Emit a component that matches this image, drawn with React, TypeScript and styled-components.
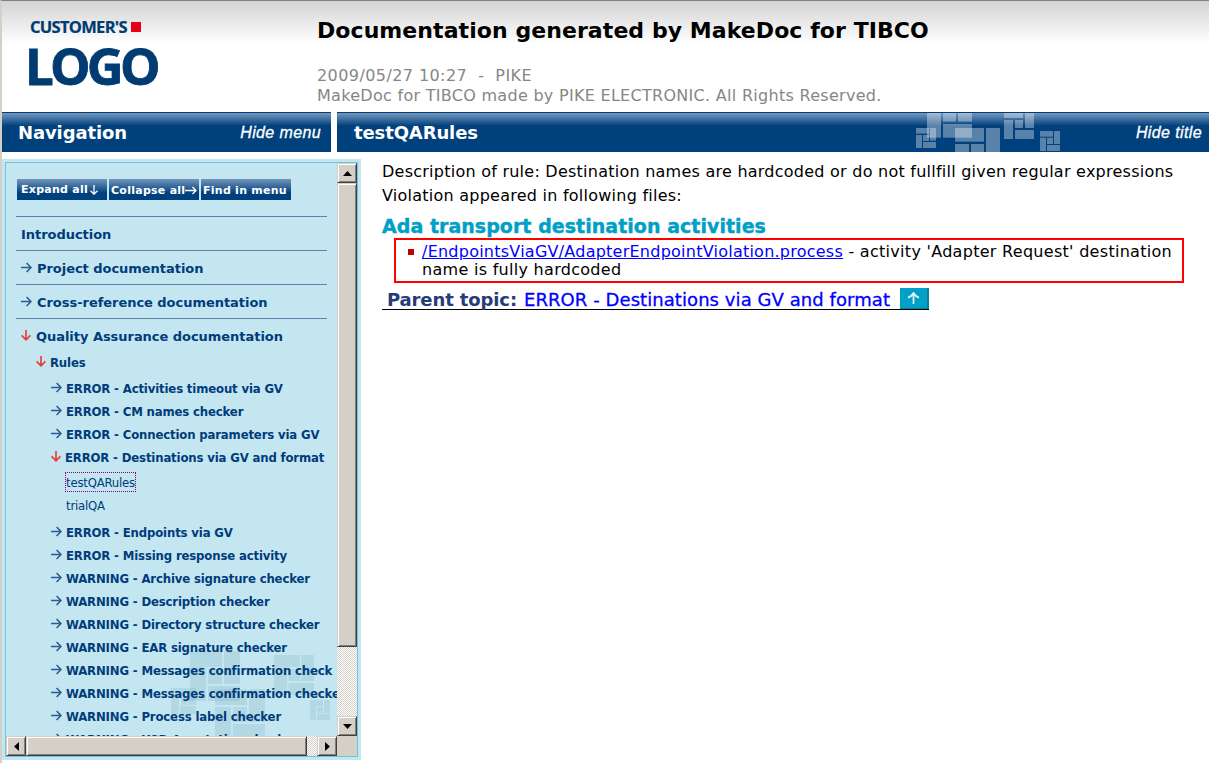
import React from 'react';
import styled, { createGlobalStyle, css } from 'styled-components';

const NAVY = '#003c7b';
const ICE = '#c4e6f0';
const SILVER = '#d4d0c8';

const GlobalStyle = createGlobalStyle`
  * { box-sizing: border-box; }
  body { margin: 0; background: #fff; overflow: hidden; font-family: 'DejaVu Sans', Verdana, sans-serif; }
`;

const Page = styled.div`
  width: 1209px;
  height: 763px;
  border-top: 1px solid #808080;
  border-left: 2px solid ${SILVER};
  display: flex;
  flex-direction: column;
  background: #fff;
  overflow: hidden;
`;

const Header = styled.header`
  height: 111px;
  flex: none;
  display: flex;
  background: linear-gradient(#d3d3d3, #fff 43px);
`;

const LogoBlock = styled.div`
  width: 315px;
  padding: 17px 0 0 28px;
  font-family: 'Open Sans', 'Noto Sans', sans-serif;
  font-weight: 700;
  color: #003b71;
  white-space: nowrap;
`;

const LogoTop = styled.div`
  display: flex;
  align-items: center;
  gap: 4px;
  height: 18px;
  font-size: 16.5px;
  line-height: 18px;
  letter-spacing: -0.7px;
  -webkit-text-stroke: 0.2px #003b71;
`;

const LogoSquare = styled.span`
  width: 10px;
  height: 10px;
  background: #e2001a;
`;

const LogoMain = styled.div`
  margin: 9px 0 0 -5px;
  font-size: 51px;
  line-height: 40px;
  letter-spacing: -3.8px;
  -webkit-text-stroke: 0.8px #003b71;
`;

const TitleBlock = styled.div`
  padding-top: 16px;
  white-space: pre;
`;

const DocTitle = styled.h1`
  margin: 0 0 21px;
  font-size: 22px;
  line-height: 28px;
  letter-spacing: 0.07px;
  color: #000;
`;

const Meta = styled.div<{ $spacing: number }>`
  font-size: 16px;
  line-height: 20px;
  letter-spacing: ${p => p.$spacing}px;
  color: #868686;
`;

const BarRow = styled.div`
  display: flex;
  gap: 6px;
  height: 40px;
  flex: none;
`;

const Bar = styled.div<{ $wide?: boolean }>`
  ${p => (p.$wide ? css`flex: 1; padding: 0 8px 0 17px;` : css`width: 329px; flex: none; padding: 0 8px 0 16px;`)}
  display: flex;
  align-items: center;
  border-top: 1px solid #003c78;
  background: linear-gradient(#7598bc, #00407d 13px);
  color: #fff;
`;

const BarTitle = styled.span`
  flex: 1;
  font-weight: 700;
  font-size: 18px;
  line-height: 39px;
  letter-spacing: -0.12px;
`;

const BarAction = styled.span<{ $wide?: boolean }>`
  font: italic 16px/40px 'Liberation Sans', Arial, sans-serif;
  letter-spacing: 0.38px;
  margin-right: ${p => (p.$wide ? '-1px' : '2px')};
  padding-top: 1px;
  -webkit-text-stroke: 0.3px #fff;
`;

const BarTiles = styled.svg`
  width: 145px;
  height: 39px;
  margin-right: 75px;
  fill: #fff;
  fill-opacity: 0.35;
  flex: none;
`;

const Body = styled.div`
  flex: 1;
  display: flex;
`;

const NavPanel = styled.nav`
  width: 359px;
  height: 601px;
  margin-top: 7px;
  padding: 3px;
  background: ${ICE};
  flex: none;
`;

const NavFrame = styled.div`
  width: 353px;
  height: 595px;
  border: 1px solid #72c4d6;
  display: grid;
  grid-template-columns: 331px 20px;
  grid-template-rows: 573px 20px;
`;

const NavScroll = styled.div`
  position: relative;
  overflow: hidden;
  padding: 16px 10px 0;
  color: ${NAVY};
`;

const PanelTiles = styled.svg`
  position: absolute;
  left: 165px;
  top: 488px;
  width: 166px;
  height: 85px;
  fill: #5d9bad;
  fill-opacity: 0.18;
`;

const NavContent = styled.div`
  position: relative;
`;

const ButtonRow = styled.div`
  display: flex;
  gap: 2px;
  margin: 0 0 16px 1px;
`;

const NavButton = styled.button<{ $first?: boolean }>`
  width: 90px;
  height: 21px;
  padding: ${p => (p.$first ? '0 0 0 4px' : '2px 0 0 2px')};
  border: 0;
  display: flex;
  align-items: center;
  background: linear-gradient(#7397bc, #00407d 14px);
  color: #fff;
  font: 700 11px/19px 'DejaVu Sans', Verdana, sans-serif;
  letter-spacing: 0.26px;
  white-space: nowrap;
  svg { flex: none; }
`;

const Section = styled.div`
  height: 34px;
  width: 311px;
  padding: 2px 0 0 5px;
  border-top: 1px solid #5b81a9;
  display: flex;
  align-items: center;
  font-weight: 700;
  font-size: 13px;
  letter-spacing: -0.04px;
  white-space: nowrap;
`;

const TreeRow = styled.div<{ $level: number; $height: number }>`
  height: ${p => p.$height}px;
  padding: 2px 0 0 ${p => 5 + p.$level * 15}px;
  display: flex;
  align-items: center;
  font: 700 13px/18px 'DejaVu Sans Condensed', 'DejaVu Sans', sans-serif;
  font-stretch: condensed;
  letter-spacing: -0.15px;
  white-space: nowrap;
`;

const RuleText = styled.span`
  margin-left: -1px;
`;

const Branch = styled.div`
  padding-top: 5px;
`;

const Leaves = styled.div`
  padding: 3px 0 3px 48px;
`;

const Leaf = styled.div`
  height: 23px;
  padding-left: 1px;
  display: flex;
  align-items: center;
  font: 400 13px/20px 'DejaVu Sans Condensed', 'DejaVu Sans', sans-serif;
  font-stretch: condensed;
  letter-spacing: -0.2px;
`;

const Focus = styled.span<{ $on?: boolean }>`
  height: 20px;
  margin-top: -1px;
  border: 1px dotted ${p => (p.$on ? '#800080' : 'transparent')};
`;

const ArrowBox = styled.svg<{ $down?: boolean }>`
  width: 11px;
  height: 11px;
  flex: none;
  margin: -2px ${p => (p.$down ? 4 : 5)}px 0 0;
  fill: none;
  stroke: ${p => (p.$down ? '#e53a3a' : '#2d5c90')};
  stroke-width: 1.6;
`;

const raised = css`
  background: ${SILVER};
  border-style: solid;
  border-width: 1px;
  border-color: ${SILVER} #404040 #404040 ${SILVER};
  box-shadow: inset 1px 1px #fff, inset -1px -1px #808080;
`;

const track = css`
  background: repeating-conic-gradient(#fff 0 25%, ${SILVER} 0 50%) 0 0 / 2px 2px;
`;

const VBar = styled.div`
  display: flex;
  flex-direction: column;
  ${track}
`;

const HBar = styled.div`
  display: flex;
  ${track}
`;

const ScrollButton = styled.div`
  width: 20px;
  height: 20px;
  flex: none;
  display: flex;
  align-items: center;
  justify-content: center;
  ${raised}
`;

const VThumb = styled.div`
  height: 464px;
  margin-bottom: 69px;
  ${raised}
`;

const HThumb = styled.div`
  width: 281px;
  margin-right: 10px;
  ${raised}
`;

const Corner = styled.div`
  background: ${SILVER};
`;

const Content = styled.main`
  padding: 8px 0 0 21px;
  color: #000;
  font-size: 16px;
`;

const Line = styled.p`
  margin: 0;
  line-height: 24px;
  letter-spacing: 0.245px;
  white-space: nowrap;
`;

const Heading = styled.h2`
  margin: 6px 0 0;
  font-size: 19px;
  line-height: 24px;
  letter-spacing: 0.04px;
  color: #00a0c6;
  -webkit-text-stroke: 0.4px #00a0c6;
`;

const Violation = styled.div`
  width: 790px;
  height: 45px;
  margin: 0 0 5px 12px;
  border: 2px solid #f00;
  padding: 3px 0 0 12px;
  display: flex;
  align-items: flex-start;
  gap: 8px;
  line-height: 18px;
`;

const Bullet = styled.span`
  width: 6px;
  height: 6px;
  margin-top: 6px;
  background: #c00000;
  flex: none;
`;

const ViolationText = styled.span`
  letter-spacing: 0.29px;
  white-space: nowrap;
`;

const FileLink = styled.a`
  color: #0000ff;
  text-decoration: underline;
  letter-spacing: 0.24px;
`;

const ParentRow = styled.div`
  width: 547px;
  height: 22px;
  padding-left: 5px;
  border-bottom: 1px solid #000;
  display: flex;
  align-items: center;
  font-size: 18px;
  line-height: 22px;
  white-space: nowrap;
`;

const ParentLabel = styled.span`
  width: 137px;
  padding-top: 2px;
  font-weight: 700;
  color: #263c78;
  letter-spacing: -0.12px;
`;

const ParentLink = styled.a`
  flex: 1;
  padding-top: 2px;
  color: #0000ff;
  letter-spacing: 0.07px;
  -webkit-text-stroke: 0.3px #0000ff;
`;

const UpButton = styled.span`
  width: 29px;
  height: 21px;
  display: flex;
  align-items: center;
  justify-content: center;
  background: #00a0c8;
  border-right: 2px solid #0b7f98;
  border-bottom: 1px solid #0b7f98;
`;

const Arrow = ({ down }: { down?: boolean }) => (
  <ArrowBox $down={down} viewBox="0 0 11 11">
    {down ? <path d="M5 0V10M0.6 5.4L5 9.8L9.4 5.4" /> : <path d="M0 5.5H10M5.6 1L10 5.5L5.6 10" />}
  </ArrowBox>
);

const Triangle = ({ kind }: { kind: 'up' | 'down' | 'left' | 'right' }) => {
  const points = {
    up: '4.5,0 9,5 0,5',
    down: '0,0 9,0 4.5,5',
    left: '0,4.5 5,0 5,9',
    right: '5,4.5 0,0 0,9',
  }[kind];
  const upright = kind === 'up' || kind === 'down';
  return (
    <svg width={upright ? 9 : 5} height={upright ? 5 : 9}>
      <polygon points={points} fill="#000" />
    </svg>
  );
};

type Box = [number, number, number, number];

const barBoxes: Box[] = [
  [141, 69, 183, 143], [189, 69, 228, 95], [234, 69, 276, 95], [189, 102, 276, 143],
  [225, 114, 312, 155], [318, 114, 360, 186], [225, 162, 267, 186], [273, 162, 312, 186],
  [108, 114, 147, 131], [150, 114, 168, 152], [108, 135, 126, 174], [129, 135, 147, 153], [129, 156, 168, 174],
  [372, 69, 429, 84], [435, 69, 462, 114], [372, 90, 399, 147], [405, 90, 429, 114], [405, 120, 462, 147],
  [480, 123, 519, 140], [522, 123, 540, 162], [480, 143, 498, 183], [501, 143, 519, 162], [501, 165, 540, 183],
];

const panelBoxes: Box[] = [
  [75, 18, 171, 66], [177, 18, 225, 117], [75, 66, 123, 168], [129, 72, 171, 117], [129, 123, 225, 168],
  [18, 129, 93, 150], [18, 150, 42, 207], [48, 156, 66, 180], [45, 183, 93, 207], [69, 153, 93, 180],
  [150, 132, 246, 180], [252, 132, 300, 231], [150, 186, 198, 273], [204, 186, 246, 231], [204, 237, 300, 273],
  [327, 30, 405, 66], [409, 30, 447, 108], [327, 66, 366, 150], [370, 72, 405, 108], [370, 114, 447, 150],
  [435, 165, 474, 183], [477, 165, 495, 204], [435, 183, 453, 225], [456, 186, 474, 204], [456, 207, 495, 225],
];

const Boxes = ({ items }: { items: Box[] }) => (
  <>
    {items.map(([x1, y1, x2, y2], i) => (
      <rect key={i} x={x1} y={y1} width={x2 - x1} height={y2 - y1} />
    ))}
  </>
);

const before = [
  'ERROR - Activities timeout via GV',
  'ERROR - CM names checker',
  'ERROR - Connection parameters via GV',
];

const after = [
  'ERROR - Endpoints via GV',
  'ERROR - Missing response activity',
  'WARNING - Archive signature checker',
  'WARNING - Description checker',
  'WARNING - Directory structure checker',
  'WARNING - EAR signature checker',
  'WARNING - Messages confirmation check',
  'WARNING - Messages confirmation checker',
  'WARNING - Process label checker',
  'WARNING - XSD Annotation checker',
];

const Rule = ({ text, open }: { text: string; open?: boolean }) => (
  <TreeRow $level={2} $height={23}>
    <Arrow down={open} />
    <RuleText>{text}</RuleText>
  </TreeRow>
);

export default function App() {
  return (
    <>
      <GlobalStyle />
      <Page>
        <Header>
          <LogoBlock>
            <LogoTop>CUSTOMER'S<LogoSquare /></LogoTop>
            <LogoMain>LOGO</LogoMain>
          </LogoBlock>
          <TitleBlock>
            <DocTitle>Documentation generated by MakeDoc for TIBCO</DocTitle>
            <Meta $spacing={0.42}>{'2009/05/27 10:27  -  PIKE'}</Meta>
            <Meta $spacing={0.29}>MakeDoc for TIBCO made by PIKE ELECTRONIC. All Rights Reserved.</Meta>
          </TitleBlock>
        </Header>
        <BarRow>
          <Bar>
            <BarTitle>Navigation</BarTitle>
            <BarAction>Hide menu</BarAction>
          </Bar>
          <Bar $wide>
            <BarTitle>testQARules</BarTitle>
            <BarTiles viewBox="108 69 435 117"><Boxes items={barBoxes} /></BarTiles>
            <BarAction $wide>Hide title</BarAction>
          </Bar>
        </BarRow>
        <Body>
          <NavPanel>
            <NavFrame>
              <NavScroll>
                <PanelTiles viewBox="18 18 498 255"><Boxes items={panelBoxes} /></PanelTiles>
                <NavContent>
                  <ButtonRow>
                    <NavButton $first>
                      Expand all
                      <svg width="11" height="11" viewBox="0 0 11 11" fill="none" stroke="#fff" strokeWidth="1.3">
                        <path d="M6 1V10M2.5 6.8L6 10.2L9.5 6.8" />
                      </svg>
                    </NavButton>
                    <NavButton>
                      Collapse all
                      <svg width="12" height="11" viewBox="0 0 12 11" fill="none" stroke="#fff" strokeWidth="1.3">
                        <path d="M0 5.5H11M7.5 2L11 5.5L7.5 9" />
                      </svg>
                    </NavButton>
                    <NavButton>Find in menu</NavButton>
                  </ButtonRow>
                  <Section>Introduction</Section>
                  <Section><Arrow />Project documentation</Section>
                  <Section><Arrow />Cross-reference documentation</Section>
                  <Section><Arrow down />Quality Assurance documentation</Section>
                  <TreeRow $level={1} $height={19}><Arrow down /><RuleText>Rules</RuleText></TreeRow>
                  <Branch>
                    {before.map(t => <Rule key={t} text={t} />)}
                    <Rule text="ERROR - Destinations via GV and format" open />
                    <Leaves>
                      <Leaf><Focus $on>testQARules</Focus></Leaf>
                      <Leaf><Focus>trialQA</Focus></Leaf>
                    </Leaves>
                    {after.map(t => <Rule key={t} text={t} />)}
                  </Branch>
                </NavContent>
              </NavScroll>
              <VBar>
                <ScrollButton><Triangle kind="up" /></ScrollButton>
                <VThumb />
                <ScrollButton><Triangle kind="down" /></ScrollButton>
              </VBar>
              <HBar>
                <ScrollButton><Triangle kind="left" /></ScrollButton>
                <HThumb />
                <ScrollButton><Triangle kind="right" /></ScrollButton>
              </HBar>
              <Corner />
            </NavFrame>
          </NavPanel>
          <Content>
            <Line>Description of rule: Destination names are hardcoded or do not fullfill given regular expressions</Line>
            <Line>Violation appeared in following files:</Line>
            <Heading>Ada transport destination activities</Heading>
            <Violation>
              <Bullet />
              <ViolationText>
                <FileLink>/EndpointsViaGV/AdapterEndpointViolation.process</FileLink> - activity 'Adapter Request' destination<br />
                name is fully hardcoded
              </ViolationText>
            </Violation>
            <ParentRow>
              <ParentLabel>Parent topic:</ParentLabel>
              <ParentLink>ERROR - Destinations via GV and format</ParentLink>
              <UpButton>
                <svg width="13" height="12" viewBox="0 0 13 12" fill="none" stroke="#e4f8fc" strokeWidth="1.7">
                  <path d="M6.5 12V1M1 5.6Q4.5 4.6 6.5 1Q8.5 4.6 12 5.6" />
                </svg>
              </UpButton>
            </ParentRow>
          </Content>
        </Body>
      </Page>
    </>
  );
}
